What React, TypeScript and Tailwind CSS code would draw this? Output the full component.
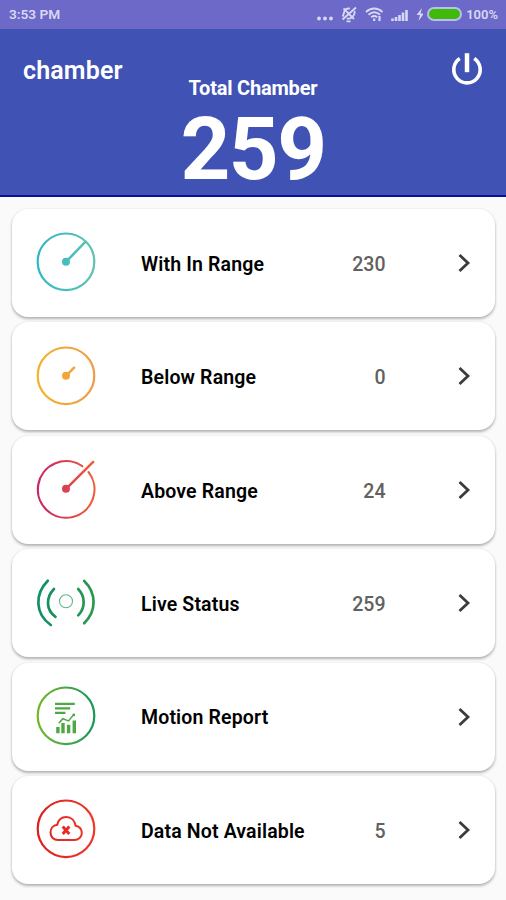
import type { ReactNode } from 'react';

interface MenuItem {
  label: string;
  count?: number;
  icon: ReactNode;
}

interface GaugeProps {
  id: string;
  from: string;
  to: string;
  ring: string;
  tip: [number, number];
}

const FULL_RING = 'M30 1.5a28.3 28.3 0 1 1 0 56.6a28.3 28.3 0 1 1 0-56.6z';
const OPEN_RING = 'M46.3 7.2A28.3 28.3 0 1 0 52.6 13.2';

function Gradient({ id, from, to }: { id: string; from: string; to: string }) {
  return (
    <linearGradient id={id} gradientUnits="userSpaceOnUse" x1="0" y1="30" x2="60" y2="30">
      <stop offset="0" stopColor={from} />
      <stop offset="1" stopColor={to} />
    </linearGradient>
  );
}

function GaugeIcon({ id, from, to, ring, tip }: GaugeProps) {
  return (
    <svg width="60" height="60" viewBox="0 0 60 60" fill="none" stroke={`url(#${id})`} strokeWidth="2.2" strokeLinecap="round">
      <defs>
        <Gradient id={id} from={from} to={to} />
      </defs>
      <path d={ring} />
      <path d={`M30 29.8L${tip[0]} ${tip[1]}`} strokeWidth="2.5" />
      <circle cx="30" cy="29.8" r="4" fill={`url(#${id})`} stroke="none" />
    </svg>
  );
}

function LiveIcon() {
  return (
    <svg width="60" height="60" viewBox="0 0 60 60" fill="none" stroke="url(#live)" strokeWidth="2.7" strokeLinecap="round">
      <defs>
        <Gradient id="live" from="#0f8f63" to="#2a9a4c" />
      </defs>
      <circle cx="30" cy="29.3" r="6.5" strokeWidth="1.1" strokeOpacity="0.7" />
      <path d="M11.8 8.8C-1.5 22.1-1 42.1 14.8 53" />
      <path d="M18 17C9.5 25.6 10 38.1 19.5 44.8" />
      <path d="M42.2 17C49.5 24.6 49.5 36.1 42.2 43.4" />
      <path d="M48.2 9C60.7 21.1 60.7 39.1 48.2 51.3" />
    </svg>
  );
}

function ReportIcon() {
  return (
    <svg width="60" height="60" viewBox="0 0 60 60" fill="none" stroke="url(#report)" strokeWidth="2.2">
      <defs>
        <Gradient id="report" from="#76b82a" to="#14985a" />
      </defs>
      <path d={FULL_RING} />
      <g stroke="#4da843">
        <path d="M19 17.9h19.8M19 22.4h15.2M19 26.9h10.4" strokeWidth="2.3" />
        <path d="M21.9 41v6.2M27 37v10.2M32.6 38.8v8.4M38.3 34.4v12.8" strokeWidth="3.4" />
        <path d="M22.8 37.3l4-4.6 5.8 2.2 4.6-5.8" strokeWidth="1.5" />
      </g>
      <circle cx="37.8" cy="28.9" r="1.4" fill="#4da843" stroke="none" />
    </svg>
  );
}

function NoDataIcon() {
  return (
    <svg width="60" height="60" viewBox="0 0 60 60" fill="none" stroke="url(#nodata)" strokeWidth="2.2">
      <defs>
        <Gradient id="nodata" from="#dc1f1a" to="#f03a2c" />
      </defs>
      <path d={FULL_RING} />
      <path
        d="M22 41h16.4c4.2 0 7.4-3 7.4-6.8 0-4-2.6-6.8-6.2-7.5C38.8 21.5 35.2 17.9 30.4 17.9c-4.6 0-8.2 3-9.2 7.9-4.2.4-6.7 3.9-6.7 7.8 0 4.3 3.2 7.4 7.5 7.4z"
        strokeWidth="2"
      />
      <path d="M26.7 27.6l6.6 7.4M33.3 27.6l-6.6 7.4" strokeWidth="3" />
    </svg>
  );
}

const items: MenuItem[] = [
  {
    label: 'With In Range',
    count: 230,
    icon: <GaugeIcon id="within" from="#2bb8c6" to="#62c2b0" ring={FULL_RING} tip={[48.8, 10.4]} />,
  },
  {
    label: 'Below Range',
    count: 0,
    icon: <GaugeIcon id="below" from="#f3b329" to="#f19a49" ring={FULL_RING} tip={[38.1, 21.6]} />,
  },
  {
    label: 'Above Range',
    count: 24,
    icon: <GaugeIcon id="above" from="#c4246a" to="#f0603a" ring={OPEN_RING} tip={[57.2, 2.8]} />,
  },
  { label: 'Live Status', count: 259, icon: <LiveIcon /> },
  { label: 'Motion Report', icon: <ReportIcon /> },
  { label: 'Data Not Available', count: 5, icon: <NoDataIcon /> },
];

function StatusBar() {
  return (
    <div className="flex h-[28.5px] items-center justify-between bg-[#6c69c8] pl-[9px] pr-[8px] text-[#d9d8f4]">
      <span className="text-[13.7px] font-semibold">3:53 PM</span>
      <div className="flex items-center">
        <svg width="106" height="20" viewBox="0 0 106 20" fill="none" stroke="currentColor" className="mr-[4px]">
          {/* More notifications */}
          <path d="M2 14.500h.01M8 14.500h.01M14 14.500h.01" strokeWidth="3.8" strokeLinecap="round" />
          {/* Muted bell */}
          <path d="M25.500 12.500c1.500-1.500 1-3.500 2-5.500 1-1.900 3.200-2.800 5.500-2.300M37.500 7c.6 2.500-.8 4.800-2.700 6.500-1.500 1.200-3.300 1.200-5 .8M39 3.500L25.500 15.500M29.500 17.300h4M26.500 4.500l10.500 10.500" strokeWidth="1.8" />
          {/* Wifi */}
          <path d="M49 8c5-4.600 11.500-4.600 16.500 0M51.500 10.700c3.600-3.100 7.900-3.100 11.500 0M54.200 13.300c2-1.600 4-1.600 6 0" strokeWidth="1.900" />
          <path d="M57.200 14.500v2.500M62.500 12v5" strokeWidth="2.200" />
          {/* Signal */}
          <path d="M75.500 14.500v2.500M79 13v4M82.500 11v6M86 8.500v8.500M89.500 6v11" strokeWidth="2.600" />
          {/* Charging */}
          <path d="M105 4l-5.500 7h3.500l-1.500 6 5.500-7.500h-3.500z" fill="currentColor" stroke="none" />
        </svg>
        <div className="h-[14px] w-[35px] rounded-full border-2 border-[#b9bfe6] bg-[#3fba0b]" />
        <span className="ml-[4px] text-[13px] font-semibold">100%</span>
      </div>
    </div>
  );
}

function Header() {
  return (
    <header className="flex h-[168.5px] flex-col border-b-2 border-[#0b0ca0] bg-[#4053b5] text-white">
      <div className="flex h-[47px] items-start justify-between pl-[23px] pr-[22px] pt-[23px]">
        <h1 className="text-[25px] font-semibold leading-[37px] tracking-[0.15px]">chamber</h1>
        <button type="button" aria-label="Log out">
          <svg width="34" height="34" viewBox="0 0 34 34" fill="none" stroke="currentColor" strokeWidth="3.6">
            <path d="M17 1.2v19" strokeWidth="4.5" />
            <path d="M9.8 6.6a13.2 13.2 0 1 0 14.4 0" />
          </svg>
        </button>
      </div>
      <div className="flex flex-col items-center">
        <span className="text-[20px] font-bold leading-[24px] tracking-[-0.2px]">Total Chamber</span>
        <span className="text-[87px] font-bold leading-[99px] tracking-[-1.5px]">259</span>
      </div>
    </header>
  );
}

function MenuCard({ label, count, icon }: MenuItem) {
  return (
    <div className="flex h-[108px] items-center rounded-[16px] bg-white pl-6 pr-[24px] shadow-[0_2px_3px_rgba(0,0,0,0.28),0_0_2px_rgba(0,0,0,0.10)]">
      <div className="pb-[1.5px]">{icon}</div>
      <span className="ml-[45px] flex-1 pt-[3px] text-[19.5px] font-semibold tracking-[0.15px] text-black">{label}</span>
      <span className="pt-[3px] text-[19.5px] font-medium text-[#616161]">{count}</span>
      <svg width="14" height="20" viewBox="0 0 14 20" fill="none" stroke="#3c3c3c" strokeWidth="2.8" className="ml-[71.5px]">
        <path d="M2.5 2l8.5 8-8.5 8" />
      </svg>
    </div>
  );
}

export default function App() {
  return (
    <div className="h-[900px] overflow-hidden bg-[#fafafa] font-['Roboto',sans-serif]">
      <StatusBar />
      <Header />
      <main className="flex flex-col gap-[5.4px] pl-[12px] pr-[11px] pt-[12px]">
        {items.map((item) => (
          <MenuCard key={item.label} {...item} />
        ))}
      </main>
    </div>
  );
}
